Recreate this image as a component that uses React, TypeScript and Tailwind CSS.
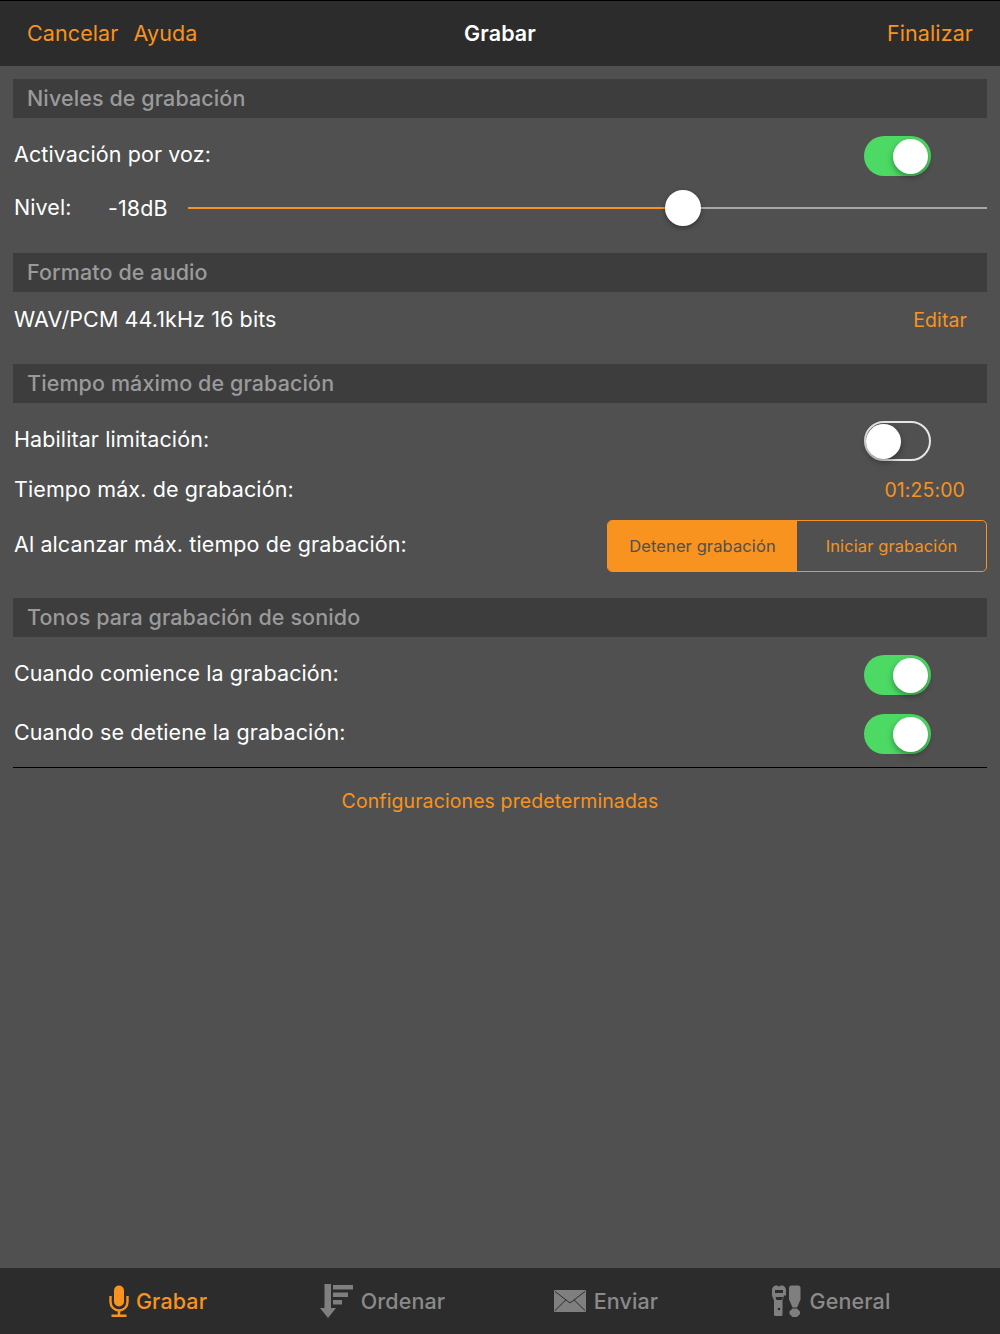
const orange = "text-[#f7931e]";

function Toggle({ on }: { on: boolean }) {
  return (
    <div className={`relative h-10 w-[67px] rounded-full ${on ? "bg-[#4cd964]" : "border-2 border-[#e5e5e5] bg-[#505050]"}`}>
      <div
        className={`absolute h-[35px] w-[35px] rounded-full bg-white shadow-[0_3px_6px_rgba(0,0,0,0.35)] ${on ? "right-[3px] top-[2.5px]" : "left-0 top-[1px]"}`}
      />
    </div>
  );
}

function Header({ children }: { children: string }) {
  return (
    <div className="mx-[13px] flex h-[39px] items-center bg-[#3d3d3d] pl-[14px] text-[21.5px] font-medium text-[#9a9a9a]">
      {children}
    </div>
  );
}

function Row({ label, height, mt, children }: { label: string; height: number; mt?: number; children?: React.ReactNode }) {
  return (
    <div className="mx-[13px] flex items-center justify-between text-[21.5px] text-white" style={{ height, marginTop: mt ?? 0 }}>
      <span className="relative bottom-[2px] left-[1px]">{label}</span>
      {children}
    </div>
  );
}

function Mic() {
  return (
    <svg width="20" height="32" viewBox="0 0 20 32" fill="none">
      <rect x="5" y="0.5" width="10" height="21" rx="5" fill="#f7931e" />
      <path d="M1.5 11v6a8.5 8.5 0 0 0 17 0v-6" stroke="#f7931e" strokeWidth="2.4" />
      <path d="M10 25v5" stroke="#f7931e" strokeWidth="2.6" />
      <rect x="2.5" y="29.5" width="15" height="2.5" fill="#f7931e" />
    </svg>
  );
}

function Sort() {
  return (
    <svg width="34" height="34" viewBox="0 0 34 34" fill="#7f7f7f">
      <path d="M5.5 0h6.5v24h5l-8 10-8-10h4.500z" />
      <path d="M14 1h20v4.500H14zM14 8.500h15V13H14zM14 16h9v4.500h-9z" />
    </svg>
  );
}

function Mail() {
  return (
    <svg width="32" height="22" viewBox="0 0 32 22">
      <rect width="32" height="22" rx="1" fill="#7f7f7f" />
      <path d="M1 1.500 16 13 31 1.500M1 20.500 12 9.800M31 20.500 20 9.800" fill="none" stroke="#2c2c2c" strokeWidth="1" />
    </svg>
  );
}

function Tools() {
  return (
    <svg width="31" height="32" viewBox="0 0 31 32" fill="#7f7f7f">
      <path d="M2 5.500C2 2 4 0.500 6.500 0.500c1.200 0 2 .5 2.500 1.500.5-1 1.300-1.500 2.500-1.500 2.500 0 4.500 1.500 4.500 5v5h-2l-1.500 5v14a1.500 1.500 0 0 1-1.500 1.500H5.500A1.500 1.500 0 0 1 4 30V15.500L2 10.500z" />
      <path d="M19 3a2.500 2.500 0 0 1 2.500-2.500h6.500A2.500 2.500 0 0 1 30.500 3v11.500l-3.500 8h-4.500L19 14.500z" />
      <path d="M22.500 23.500h4.500l3 3v2.500l-3 3h-4.500l-3-3v-2.500z" />
      <path d="M5 5h8v3H5zM5.500 12h7.500l-1 3H6.500z" fill="#2c2c2c" />
      <circle cx="9" cy="24" r="1.300" fill="#2c2c2c" />
    </svg>
  );
}

function Tab({ icon, label, active, gap, width }: { icon: React.ReactNode; label: string; active?: boolean; gap: number; width: number }) {
  return (
    <div className="flex items-center justify-center" style={{ width, gap }}>
      {icon}
      <span className={`text-[21.500px] font-medium ${active ? orange : "text-[#8a8a8a]"}`}>{label}</span>
    </div>
  );
}

export default function App() {
  return (
    <div className="flex h-[1334px] w-[1000px] flex-col overflow-hidden bg-[#505050] font-['Inter','Liberation_Sans',sans-serif] tracking-[0.1px]">
      <div className="relative flex h-[66px] shrink-0 items-center border-t border-black bg-[#2c2c2c] px-[27px] text-[21.500px]">
        <span className={`${orange}`}>Cancelar</span>
        <span className={`${orange} ml-[15px]`}>Ayuda</span>
        <span className="absolute inset-x-0 text-center font-semibold text-white">Grabar</span>
        <span className={`${orange} ml-auto`}>Finalizar</span>
      </div>

      <div className="mt-[13px]">
        <Header>Niveles de grabación</Header>
      </div>
      <Row label="Activación por voz:" height={44} mt={16}>
        <div className="mr-[56px]"><Toggle on /></div>
      </Row>
      <div className="mx-[13px] mt-[8px] flex h-[44px] items-center text-[21.500px] text-white">
        <span className="relative bottom-[1px] left-[1px] w-[95px]">Nivel:</span>
        <span className="w-[80px]">-18dB</span>
        <div className="relative flex h-[2px] flex-1 bg-[#a8a8a8]">
          <div className="h-full w-[495px] bg-[#f7931e]" />
          <div className="absolute left-[477px] top-[-17px] h-9 w-9 rounded-full bg-white shadow-[0_2px_5px_rgba(0,0,0,0.35)]" />
        </div>
      </div>

      <div className="mt-[23px]">
        <Header>Formato de audio</Header>
      </div>
      <Row label="WAV/PCM 44.1kHz 16 bits" height={58}>
        <span className={`mr-[20px] text-[19.500px] ${orange}`}>Editar</span>
      </Row>

      <div className="mt-[14px]">
        <Header>Tiempo máximo de grabación</Header>
      </div>
      <Row label="Habilitar limitación:" height={44} mt={16}>
        <div className="mr-[56px]"><Toggle on={false} /></div>
      </Row>
      <Row label="Tiempo máx. de grabación:" height={44} mt={6}>
        <span className={`mr-[22px] text-[19.500px] ${orange}`}>01:25:00</span>
      </Row>
      <Row label="Al alcanzar máx. tiempo de grabación:" height={52} mt={7}>
        <div className="flex h-[52px] w-[380px] overflow-hidden rounded-[5px] border border-[#f7931e] text-[16.500px]">
          <div className="flex w-[189px] items-center justify-center bg-[#f7931e] text-[#505050]">Detener grabación</div>
          <div className={`flex flex-1 items-center justify-center ${orange}`}>Iniciar grabación</div>
        </div>
      </Row>

      <div className="mt-[26px]">
        <Header>Tonos para grabación de sonido</Header>
      </div>
      <Row label="Cuando comience la grabación:" height={44} mt={16}>
        <div className="mr-[56px]"><Toggle on /></div>
      </Row>
      <Row label="Cuando se detiene la grabación:" height={44} mt={15}>
        <div className="mr-[56px]"><Toggle on /></div>
      </Row>
      <div className="mx-[13px] mt-[11px] border-t border-black" />
      <div className={`mt-[19px] text-center text-[19.500px] ${orange}`}>Configuraciones predeterminadas</div>

      <div className="mt-auto flex h-[66px] shrink-0 items-center bg-[#2c2c2c] pl-[46px]">
        <Tab icon={<Mic />} label="Grabar" active gap={7} width={224} />
        <Tab icon={<Sort />} label="Ordenar" gap={8} width={224} />
        <Tab icon={<Mail />} label="Enviar" gap={8} width={224} />
        <Tab icon={<Tools />} label="General" gap={9} width={224} />
      </div>
    </div>
  );
}
